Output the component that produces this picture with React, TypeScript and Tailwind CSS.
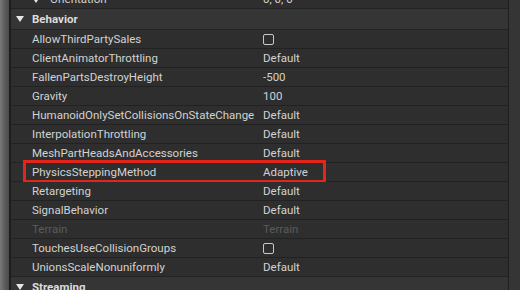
import React from "react"

type Prop = {
  name: string
  value?: string
  checkbox?: boolean
  disabled?: boolean
  marked?: boolean
}

const behavior: Prop[] = [
  { name: "AllowThirdPartySales", checkbox: true },
  { name: "ClientAnimatorThrottling", value: "Default" },
  { name: "FallenPartsDestroyHeight", value: "-500" },
  { name: "Gravity", value: "100" },
  { name: "HumanoidOnlySetCollisionsOnStateChange", value: "Default" },
  { name: "InterpolationThrottling", value: "Default" },
  { name: "MeshPartHeadsAndAccessories", value: "Default" },
  { name: "PhysicsSteppingMethod", value: "Adaptive", marked: true },
  { name: "Retargeting", value: "Default" },
  { name: "SignalBehavior", value: "Default" },
  { name: "Terrain", value: "Terrain", disabled: true },
  { name: "TouchesUseCollisionGroups", checkbox: true },
  { name: "UnionsScaleNonuniformly", value: "Default" },
]

function Caret() {
  return (
    <svg width="8" height="6" viewBox="0 0 8 6" className="shrink-0">
      <path d="M0 0 H8 L4 6 Z" fill="#e6e6e6" />
    </svg>
  )
}

function Checkbox() {
  return <div className="-mt-[2px] w-[11px] h-[11px] rounded-[2px] border-[1.5px] border-[#c8c8c8]" />
}

function Row({ p }: { p: Prop }) {
  const tone = p.disabled ? "text-[#5c5c5c]" : "text-[#d2d2d2]"
  return (
    <div className="relative flex h-[19px] items-center border-b border-[#222222] bg-[#2e2e2e] pt-[2px]">
      <div className={`w-[231px] shrink-0 pl-[21px] ${tone}`}>{p.name}</div>
      <div className={`flex-1 pl-[21px] ${tone}`}>{p.checkbox ? <Checkbox /> : p.value}</div>
      {p.marked && (
        <div className="absolute top-[-3px] left-[12px] w-[303px] h-[23px] border-[3px] border-[#e4261a]" />
      )}
    </div>
  )
}

function Header({ title }: { title: string }) {
  return (
    <div className="flex h-[21px] items-center gap-[8px] border-b border-[#222222] bg-[#353535] pl-[5px] font-bold text-[#dcdcdc]">
      <Caret />
      <span className="pt-[1px]">{title}</span>
    </div>
  )
}

export default function App() {
  return (
    <div
      className="flex h-[290px] w-[520px] overflow-hidden bg-[#2e2e2e] text-[11.5px] leading-none"
      style={{ fontFamily: "Roboto, 'Noto Sans', sans-serif" }}
    >
      {/* viewport edge behind the panel */}
      <div className="w-[9px] shrink-0 bg-gradient-to-r from-[#7a7a7a] via-[#5e5e5e] to-[#4a4a4a]" />
      <div className="w-[2px] shrink-0 bg-[#1e1e1e]" />

      <div className="flex-1 overflow-hidden">
        <div className="-mt-[10px]">
          <div className="flex h-[19px] items-center border-b border-[#222222] bg-[#2e2e2e] pt-[2px] text-[#d2d2d2]">
            <div className="flex w-[231px] shrink-0 items-center gap-[10px] pl-[21px]">
              <Caret />
              <span>Orientation</span>
            </div>
            <div className="pl-[21px]">0, 0, 0</div>
          </div>
          <Header title="Behavior" />
          {behavior.map((p) => (
            <Row key={p.name} p={p} />
          ))}
          <Header title="Streaming" />
        </div>
      </div>

      {/* scrollbar track */}
      <div className="w-[12px] shrink-0 border-l border-[#1f1f1f] bg-[#353535]" />
    </div>
  )
}
